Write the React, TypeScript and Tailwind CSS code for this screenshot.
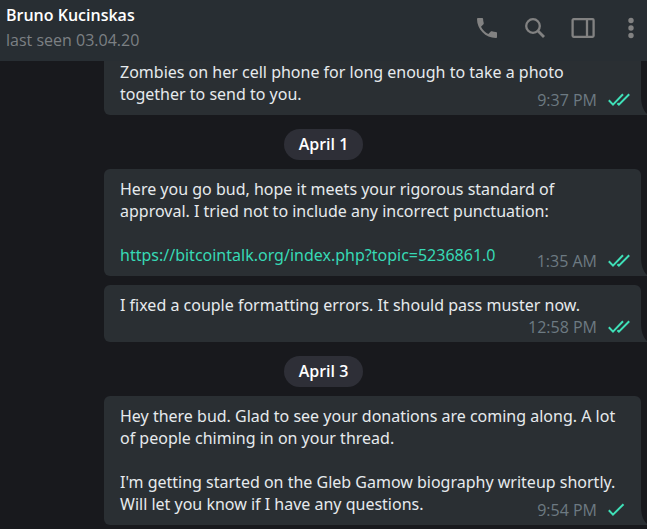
import type { ReactNode } from "react";

function Ticks({ read }: { read: boolean }) {
  return (
    <svg
      width="22"
      height="14"
      viewBox="0 0 22 14"
      fill="none"
      stroke="#3fe0b8"
      strokeWidth="2"
      role="img"
      aria-label={read ? "Read" : "Sent"}
    >
      {read ? (
        <>
          <path d="M0.8 7.2 L5 11.6 L15 1.2" />
          <path d="M9.4 10.2 L10.9 11.6 L21.2 1.2" />
        </>
      ) : (
        <path d="M0.8 7.2 L5 11.6 L15.5 1.2" />
      )}
    </svg>
  );
}

function Stamp({ time, read = true, ownLine = false }: { time: string; read?: boolean; ownLine?: boolean }) {
  return (
    <span
      className={`float-right -mr-[9px] flex items-center gap-[11px] font-['Open_Sans','Noto_Sans',sans-serif] text-[#6d7a82] ${
        ownLine ? "" : "mt-1.5"
      }`}
    >
      <time>{time}</time>
      <Ticks read={read} />
    </span>
  );
}

function Message({ clipped = false, children }: { clipped?: boolean; children: ReactNode }) {
  return (
    <article
      className={`relative mr-1.5 ml-[104px] flow-root rounded-bl-md bg-[#2a2f33] pr-5 pb-1 pl-4 text-[#e6eaed] ${
        clipped ? "" : "rounded-t-md pt-[9px]"
      }`}
    >
      {children}
      <svg className="absolute bottom-0 left-full" width="6" height="20" viewBox="0 0 6 20" aria-hidden="true">
        <path d="M0 0 V20 H6 V19 C2 15 0 10 0 0 Z" fill="#2a2f33" />
      </svg>
    </article>
  );
}

function DateLabel({ children }: { children: ReactNode }) {
  return (
    <div className="mt-3.5 mb-[9px] flex justify-center">
      <span className="flex h-[31px] items-center rounded-full bg-[#2e2f37] px-[15px] pb-0.5 font-['Open_Sans','Noto_Sans',sans-serif] font-semibold text-white">
        {children}
      </span>
    </div>
  );
}

function IconButton({ label, children }: { label: string; children: ReactNode }) {
  return (
    <button type="button" aria-label={label} className="flex size-6 items-center justify-center">
      {children}
    </button>
  );
}

export default function App() {
  return (
    <div className="min-h-screen bg-[#18191d] font-['Noto_Sans','Open_Sans',sans-serif] text-base leading-[22px]">
      <header className="flex h-[61px] items-start justify-between bg-[#282e33] pl-1.5 font-['Open_Sans','Noto_Sans',sans-serif]">
        <div className="pt-1">
          <h1 className="font-semibold text-white">Bruno Kucinskas</h1>
          <p className="mt-[3px] text-[#7c8084]">last seen 03.04.20</p>
        </div>
        <nav aria-label="Chat actions" className="flex gap-6 pt-4 pr-1 text-[#828282]">
          <IconButton label="Call">
            <svg width="20" height="20" viewBox="3 3 18 18" fill="currentColor">
              <path d="M6.62 10.79c1.44 2.83 3.76 5.14 6.59 6.59l2.2-2.2c.27-.27.67-.36 1.02-.24 1.12.37 2.33.57 3.57.57.55 0 1 .45 1 1V20c0 .55-.45 1-1 1-9.39 0-17-7.61-17-17 0-.55.45-1 1-1h3.5c.55 0 1 .45 1 1 0 1.25.2 2.45.57 3.57.11.35.03.74-.25 1.02z" />
            </svg>
          </IconButton>
          <IconButton label="Search">
            <svg width="20" height="20" viewBox="0 0 20 20" fill="none" stroke="currentColor">
              <circle cx="8" cy="8" r="6.8" strokeWidth="2.3" />
              <path d="M12.8 12.8 L19 19" strokeWidth="2.8" />
            </svg>
          </IconButton>
          <IconButton label="Toggle side panel">
            <svg width="24" height="20" viewBox="0 0 24 20" fill="none" stroke="currentColor" strokeWidth="2.3">
              <rect x="1.6" y="1.2" width="21" height="17.6" rx="1" />
              <path d="M16 1 V19" />
            </svg>
          </IconButton>
          <IconButton label="More">
            <svg width="6" height="22" viewBox="0 0 6 22" fill="currentColor">
              <circle cx="3" cy="3.5" r="2.7" />
              <circle cx="3" cy="11" r="2.7" />
              <circle cx="3" cy="18.5" r="2.7" />
            </svg>
          </IconButton>
        </nav>
      </header>

      <main className="pb-1">
        <Message clipped>
          <p>
            Zombies on her cell phone for long enough to take a photo together to send to you.
            <Stamp time="9:37 PM" />
          </p>
        </Message>

        <DateLabel>April 1</DateLabel>
        <Message>
          <p>
            Here you go bud, hope it meets your rigorous standard of approval. I tried not to include any incorrect
            punctuation:
          </p>
          <p className="mt-[22px]">
            <a href="https://bitcointalk.org/index.php?topic=5236861.0" className="text-[#37d9b5]">
              https://bitcointalk.org/index.php?topic=5236861.0
            </a>
            <Stamp time="1:35 AM" />
          </p>
        </Message>
        <div className="h-[9px]" />
        <Message>
          <p>
            I fixed a couple formatting errors. It should pass muster now.
            <Stamp time="12:58 PM" ownLine />
          </p>
        </Message>

        <DateLabel>April 3</DateLabel>
        <Message>
          <p>
            Hey there bud. Glad to see your donations are coming along. A lot of people chiming in on your thread.
          </p>
          <p className="mt-[22px]">
            I'm getting started on the Gleb Gamow biography writeup shortly. Will let you know if I have any
            questions.
            <Stamp time="9:54 PM" read={false} />
          </p>
        </Message>
      </main>
    </div>
  );
}
